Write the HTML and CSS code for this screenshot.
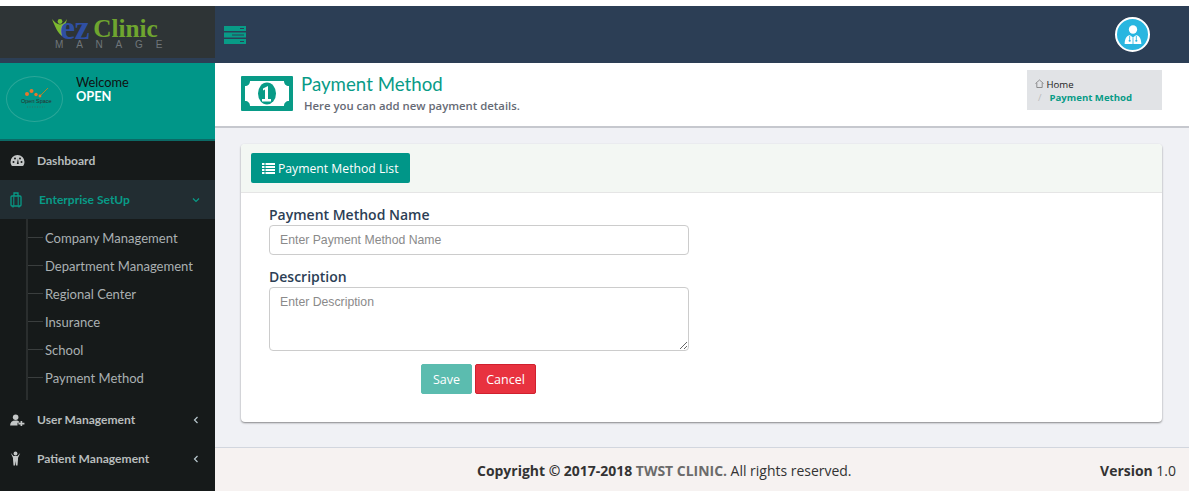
FILE: index.html
```html
<!DOCTYPE html>
<html>
<head>
    <title>Payment Method</title>
    <link rel="stylesheet" href="styles.css">
</head>
<body>
<div class="shell">
    <div class="sidebar">
        <div class="logo">
            <div class="logo-top">
                <svg class="logo-man" width="16" height="19" viewBox="0 0 16 19">
                    <circle cx="8" cy="3.500" r="2.400" fill="#7cb82f"/>
                    <path d="M0 1 C3 4 5 6.500 8 6.500 C11 6.500 13 4 15 1 C14 6 12 9 11 12 L10 18 C6 15 3 9 0 1Z" fill="#7cb82f"/>
                </svg>
                <span class="logo-ez">ez</span>
                <span class="logo-clinic">Clinic</span>
            </div>
            <div class="logo-sub">MANAGE</div>
        </div>
        <div class="welcome">
            <div class="avatar">
                <svg width="36" height="24" viewBox="0 0 36 24">
                    <circle cx="10" cy="7" r="2" fill="#e8762c"/>
                    <circle cx="14.500" cy="4" r="2" fill="#e8762c"/>
                    <circle cx="19" cy="7.500" r="1.700" fill="#e8762c"/>
                    <circle cx="23" cy="9" r="1.400" fill="#e8762c"/>
                    <path d="M24 8 L31 1" stroke="#a8892c" stroke-width="1" fill="none"/>
                    <text x="4" y="16" class="avatar-text">Open Space</text>
                    <path d="M10 20h18" stroke="#2f6f63" stroke-width="1" stroke-dasharray="1 1.500"/>
                </svg>
            </div>
            <div class="welcome-text">
                <div class="welcome-hi">Welcome</div>
                <div class="welcome-name">OPEN</div>
            </div>
        </div>
        <div class="menu">
            <div class="menu-item">
                <svg class="menu-icon" width="15" height="13" viewBox="0 0 15 13"><path d="M7.500 1A7 7 0 0 0 .5 8c0 1.300.4 2.500 1 3.500.2.300.5.500.9.500h10.200c.4 0 .7-.2.900-.5.600-1 1-2.200 1-3.500a7 7 0 0 0-7-7Z" fill="#c4c7c7"/><circle cx="3.500" cy="8" r="1" fill="#161a1a"/><circle cx="5" cy="4.500" r="1" fill="#161a1a"/><circle cx="10" cy="4.500" r="1" fill="#161a1a"/><circle cx="11.500" cy="8" r="1" fill="#161a1a"/><path d="M6.800 10 8 4.500l.8 5.500Z" fill="#161a1a"/></svg>
                <span class="menu-label">Dashboard</span>
            </div>
            <div class="menu-item active">
                <svg class="menu-icon" width="15" height="16" viewBox="0 0 15 16"><path d="M4 4V1h4v3" fill="none" stroke="#089b87" stroke-width="1.300"/><rect x="1" y="4" width="10" height="10" rx="1" fill="none" stroke="#089b87" stroke-width="1.300"/><path d="M3.800 4.500v9M8.200 4.500v9" stroke="#089b87" stroke-width="1"/><path d="M3 14v1.500M9 14v1.500" stroke="#089b87" stroke-width="1.300"/></svg>
                <span class="menu-label">Enterprise SetUp</span>
                <svg class="chev" width="10" height="10" viewBox="0 0 10 10"><path d="M2 3.500 5 6.500 8 3.500" fill="none" stroke="#089b87" stroke-width="1.200"/></svg>
            </div>
            <div class="submenu">
                <div class="sub-item">Company Management</div>
                <div class="sub-item">Department Management</div>
                <div class="sub-item">Regional Center</div>
                <div class="sub-item">Insurance</div>
                <div class="sub-item">School</div>
                <div class="sub-item">Payment Method</div>
            </div>
            <div class="menu-item">
                <svg class="menu-icon" width="15" height="12" viewBox="0 0 16 13"><circle cx="6" cy="3.500" r="3" fill="#c4c7c7"/><path d="M0 12.500c0-3.500 2-5.500 6-5.500 2 0 3 .5 4 1.500v1H8v3Z" fill="#c4c7c7"/><path d="M9 10.500h6.500M12.200 7.500v5.500" stroke="#c4c7c7" stroke-width="1.800"/></svg>
                <span class="menu-label">User Management</span>
                <svg class="chev" width="10" height="10" viewBox="0 0 10 10"><path d="M6.500 2 3.500 5 6.500 8" fill="none" stroke="#b8c7ce" stroke-width="1.200"/></svg>
            </div>
            <div class="menu-item">
                <svg class="menu-icon" width="15" height="15" viewBox="0 0 15 15"><circle cx="5.500" cy="2.500" r="1.900" fill="#c4c7c7"/><path d="M.8 2 3.500 5h4L10.200 2 8 7v1.500l-.5 6H6L5.500 10 5 14.500H3.500L3 8.500V7Z" fill="#c4c7c7"/></svg>
                <span class="menu-label">Patient Management</span>
                <svg class="chev" width="10" height="10" viewBox="0 0 10 10"><path d="M6.500 2 3.500 5 6.500 8" fill="none" stroke="#b8c7ce" stroke-width="1.200"/></svg>
            </div>
        </div>
    </div>
    <div class="main">
        <div class="topbar">
            <svg width="22" height="18" viewBox="0 0 22 18"><path d="M0 0h22v5H0ZM0 6.500h22v5H0ZM0 13h22v5H0Z" fill="#089b87"/><path d="M16 2.500h4M8 9h12M16 15.500h4" stroke="#2c3e55" stroke-width="1"/></svg>
            <div class="user-pic">
                <svg width="20" height="21" viewBox="0 0 24 25"><circle cx="12" cy="6.500" r="5" fill="#fff"/><path d="M2 24c0-7 2.500-10 6-11l4 3 4-3c3.500 1 6 4 6 11Z" fill="#fff"/><path d="M8 14v5M16 14v5M12 16v8" stroke="#29b6e0" stroke-width="1"/><circle cx="8" cy="20" r="1.300" fill="#29b6e0"/><circle cx="16" cy="20" r="1.300" fill="#29b6e0"/></svg>
            </div>
        </div>
        <div class="page-head">
            <svg class="bill" width="52" height="35" viewBox="0 0 52 35"><rect width="52" height="35" rx="1" fill="#089b87"/><path d="M9 5h34c0 3 2 5 5 5v15c-3 0-5 2-5 5H9c0-3-2-5-5-5V10c3 0 5-2 5-5Z" fill="#fff"/><ellipse cx="26" cy="17.500" rx="9" ry="11" fill="#089b87"/><path d="M22 12.500l5-2.500v13h3v2.500h-9V23h3V13.500l-2 1Z" fill="#fff"/></svg>
            <div class="head-text">
                <h1>Payment Method</h1>
                <div class="head-sub">Here you can add new payment details.</div>
            </div>
            <div class="crumbs">
                <div class="crumb-home"><svg width="9" height="9" viewBox="0 0 9 9"><path d="M.5 4.500 4.500 1l4 3.500M1.800 4v4.500h5.400V4" fill="none" stroke="#777" stroke-width=".8"/></svg> Home</div>
                <div class="crumb-now"><span class="crumb-sep">/</span>Payment Method</div>
            </div>
        </div>
        <div class="content">
            <div class="card">
                <div class="card-head">
                    <a class="list-btn">
                        <svg width="13" height="11" viewBox="0 0 13 11"><path d="M0 0h2.500v2H0ZM3.500 0H13v2H3.500ZM0 3h2.500v2H0ZM3.500 3H13v2H3.500ZM0 6h2.500v2H0ZM3.500 6H13v2H3.500ZM0 9h2.500v2H0ZM3.500 9H13v2H3.500Z" fill="#fff"/></svg>
                        Payment Method List
                    </a>
                </div>
                <div class="card-body">
                    <label class="field-label">Payment Method Name</label>
                    <input class="field" type="text" placeholder="Enter Payment Method Name">
                    <label class="field-label second">Description</label>
                    <textarea class="field area" placeholder="Enter Description"></textarea>
                    <div class="actions">
                        <button class="btn save">Save</button>
                        <button class="btn cancel">Cancel</button>
                    </div>
                </div>
            </div>
        </div>
        <div class="footer">
            <div class="copy"><b>Copyright © 2017-2018 <span class="brand">TWST CLINIC.</span></b> All rights reserved.</div>
            <div class="version"><b>Version</b> 1.0</div>
        </div>
    </div>
</div>
</body>
</html>
```

FILE: styles.css
```css
* {
    box-sizing: border-box;
}

body {
    margin: 0;
    padding: 6px 9px 7px 0;
    background-color: #fff;
    font-family: "Open Sans", sans-serif;
    height: 498px;
    overflow: hidden;
}

.shell {
    display: flex;
    height: 485px;
}

/* sidebar */
.sidebar {
    width: 215px;
    flex: none;
    display: flex;
    flex-direction: column;
    background-color: #161a1a;
}

.logo {
    height: 57px;
    padding-top: 9px;
    background-color: #2e3436;
    border-bottom: 5px solid #2c3e55;
}

.logo-top {
    display: flex;
    align-items: flex-end;
    height: 26px;
    padding-left: 52px;
    font-family: "Liberation Serif", serif;
    font-weight: bold;
}

.logo-man {
    margin-right: -8px;
    margin-bottom: 4px;
}

.logo-ez {
    color: #2f4fa3;
    font-size: 34px;
    line-height: 26px;
    letter-spacing: -.5px;
    margin-right: 4px;
}

.logo-clinic {
    color: #6fa52f;
    font-size: 25.300px;
    line-height: 26px;
}

.logo-sub {
    color: #70767a;
    font-family: "Liberation Sans", sans-serif;
    font-size: 10px;
    line-height: 11px;
    letter-spacing: 12.800px;
    padding-left: 55px;
    margin-top: -2px;
    white-space: nowrap;
}

.welcome {
    height: 78px;
    display: flex;
    background-color: #009688;
    border-bottom: 2px solid #0b6a66;
    padding: 13px 0 0 6px;
}

.avatar {
    width: 57px;
    height: 46px;
    border: 1px solid #2aa698;
    border-radius: 50%;
    display: flex;
    align-items: center;
    justify-content: center;
}

.avatar-text {
    font-family: "Liberation Sans", sans-serif;
    font-size: 5.500px;
    fill: #2b2b2b;
}

.welcome-text {
    margin-left: 13px;
    margin-top: -1px;
    font-family: Lato, sans-serif;
    font-size: 12.800px;
    line-height: 14px;
}

.welcome-hi {
    color: #111;
}

.welcome-name {
    color: #fff;
    font-weight: 700;
}

.menu-item {
    height: 39px;
    display: flex;
    align-items: center;
    padding-left: 10px;
    color: #b8bdbd;
    font-family: Lato, sans-serif;
    font-size: 12.050px;
    font-weight: 700;
}

.menu-icon {
    flex: none;
    margin-right: 12px;
}

.menu-item.active {
    background-color: #222d32;
    color: #089b87;
}

.menu-item.active .menu-label {
    margin-left: 2px;
}

.chev {
    margin-left: auto;
    margin-right: 14px;
}

.submenu {
    margin-left: 26px;
    border-left: 2px solid #2a2e2e;
    padding-top: 5px;
    padding-bottom: 8px;
}

.sub-item {
    height: 28px;
    display: flex;
    align-items: center;
    color: #aab0b2;
    font-family: Lato, sans-serif;
    font-size: 13.050px;
    padding-bottom: 1px;
}

.sub-item:before {
    content: "";
    width: 15px;
    height: 1px;
    background-color: #3a3e3e;
    margin-right: 2px;
}

/* main column */
.main {
    flex: 1;
    display: flex;
    flex-direction: column;
    background-color: #f0f1f5;
}

.topbar {
    height: 57px;
    flex: none;
    background-color: #2c3e55;
    display: flex;
    align-items: center;
    justify-content: space-between;
    padding: 0 39px 0 9px;
}

.user-pic {
    width: 35px;
    height: 35px;
    border-radius: 50%;
    background-color: #29b6e0;
    border: 2px solid #fff;
    display: flex;
    align-items: center;
    justify-content: center;
}

.page-head {
    height: 65px;
    flex: none;
    background-color: #fff;
    border-bottom: 2px solid #c6c8ce;
    display: flex;
    padding: 7px 27px 0 26px;
}

.bill {
    margin-top: 6px;
    flex: none;
}

.head-text {
    margin-left: 8px;
    flex: 1;
}

h1 {
    margin: 0;
    color: #089b87;
    font-family: Lato, sans-serif;
    font-size: 18.700px;
    font-weight: 400;
    line-height: 28px;
}

.head-sub {
    color: #666a75;
    font-size: 11.350px;
    font-weight: 600;
    line-height: 16px;
    margin-left: 3px;
}

.crumbs {
    width: 135px;
    height: 40px;
    background-color: #e1e3e6;
    padding: 8px 0 0 8px;
    font-size: 9.600px;
    line-height: 13px;
}

.crumb-home {
    color: #222;
}

.crumb-now {
    color: #089b87;
    font-weight: 700;
}

.crumb-sep {
    color: #bbb;
    font-weight: 400;
    margin: 0 8px 0 3px;
}

.content {
    flex: 1;
    padding: 16px 27px 0 26px;
}

.card {
    height: 278px;
    background-color: #fff;
    border-radius: 4px;
    box-shadow: 0 1px 2px rgba(0, 0, 0, .45);
}

.card-head {
    height: 49px;
    background-color: #f3f7f3;
    border-bottom: 1px solid #e5e5e5;
    border-radius: 4px 4px 0 0;
    padding: 9px 0 0 10px;
}

.list-btn {
    display: inline-flex;
    align-items: center;
    gap: 3px;
    height: 30px;
    padding: 0 11px;
    background-color: #009688;
    border-radius: 2px;
    color: #fff;
    font-size: 12.200px;
}

.card-body {
    padding: 13px 0 0 28px;
}

.field-label {
    display: block;
    color: #2c3e55;
    font-size: 14px;
    font-weight: 600;
    line-height: 18px;
    margin-bottom: 1px;
}

.field-label.second {
    margin-top: 13px;
}

.field {
    display: block;
    width: 420px;
    height: 30px;
    border: 1px solid #ccc;
    border-radius: 4px;
    padding: 0 10px;
    font-family: "Liberation Sans", sans-serif;
    font-size: 12.250px;
    background-color: #fff;
}

.field::placeholder {
    color: #8a8a8a;
}

.area {
    height: 64px;
    padding-top: 7px;
}

.actions {
    display: flex;
    gap: 3px;
    margin: 13px 0 0 152px;
}

.btn {
    height: 30px;
    border-radius: 2px;
    color: #fff;
    font-family: "Open Sans", sans-serif;
    font-size: 12.500px;
}

.save {
    width: 51px;
    background-color: #5bbcaf;
    border: 1px solid #5bbcaf;
}

.cancel {
    width: 61px;
    background-color: #e8323f;
    border: 1px solid #d0202e;
}

.footer {
    height: 44px;
    flex: none;
    background-color: #f6f2f1;
    border-top: 1px solid #d2d6de;
    display: flex;
    align-items: center;
    justify-content: space-between;
    padding: 2px 13px 0 262px;
    color: #333;
    font-size: 13.960px;
}

.brand {
    color: #6b6b6b;
}
```
